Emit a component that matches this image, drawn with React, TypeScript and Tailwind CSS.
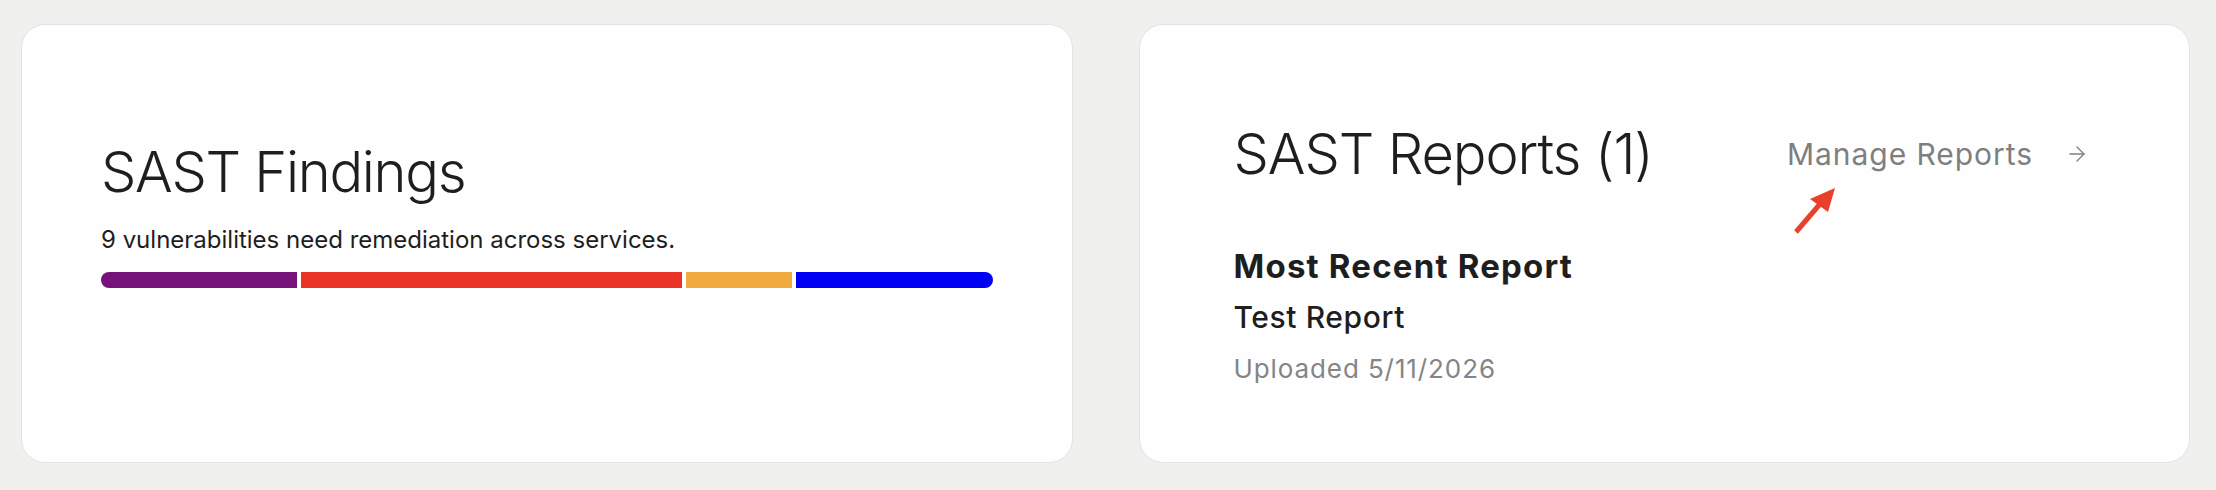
import { ArrowRight } from "lucide-react";

// Segment widths in px, taken from the severity breakdown
const segments = [
  { label: "critical", width: 197, color: "bg-[#75137a]" },
  { label: "high", width: 382, color: "bg-[#ea3425]" },
  { label: "medium", width: 106, color: "bg-[#f0aa3e]" },
  { label: "low", width: 197, color: "bg-[#0000f2]" },
];

function FindingsCard() {
  return (
    <div className="rounded-[24px] border border-[#e3e3e1] bg-[#fefefe] pt-[119px] px-[79px]">
      <h2 className="text-[56px] leading-none font-light tracking-[-1.3px] text-[#1e1e1e]">SAST Findings</h2>
      <p className="mt-[28px] text-[24px] leading-none text-[#1e1e1e]">
        9 vulnerabilities need remediation across services.
      </p>
      <div className="mt-[20px] flex h-4 gap-1 overflow-hidden rounded-full">
        {segments.map((s) => (
          <div key={s.label} className={`h-full ${s.color}`} style={{ width: s.width }} />
        ))}
      </div>
    </div>
  );
}

function ReportsCard() {
  return (
    <div className="rounded-[24px] border border-[#e3e3e1] bg-[#fefefe] pt-[101px] pl-[94px] pr-[100px]">
      <div className="flex items-center justify-between">
        <h2 className="text-[56px] leading-none font-light tracking-[-1.1px] text-[#1e1e1e]">SAST Reports (1)</h2>
        <div className="relative flex items-center gap-[32px] text-[#7f7f7f]">
          <span className="text-[30px] leading-none tracking-[0.95px]">Manage Reports</span>
          <ArrowRight size={24} strokeWidth={1.3} />
          {/* annotation arrow */}
          <svg className="absolute left-[5px] top-[46px]" width="46" height="50" viewBox="0 0 46 50">
            <line x1="4" y1="47" x2="28" y2="19" stroke="#e8402a" strokeWidth="5" />
            <polygon points="43,3 18,14 36,27" fill="#e8402a" />
          </svg>
        </div>
      </div>
      <h3 className="mt-[68px] text-[33px] leading-none font-bold tracking-[1.2px] text-[#1e1e1e]">Most Recent Report</h3>
      <p className="mt-[19px] text-[30px] leading-none font-medium tracking-[0.6px] text-[#1e1e1e]">Test Report</p>
      <p className="mt-[24px] text-[26px] leading-none tracking-[0.9px] text-[#858585]">Uploaded 5/11/2026</p>
    </div>
  );
}

export default function App() {
  return (
    <div
      className="h-[490px] bg-[#f0f0ef] pl-[21px] pr-[26px] pt-[24px] pb-[27px]"
      style={{ fontFamily: "Inter, 'Noto Sans', sans-serif" }}
    >
      <div className="grid h-full grid-cols-2 gap-[66px]">
        <FindingsCard />
        <ReportsCard />
      </div>
    </div>
  );
}
